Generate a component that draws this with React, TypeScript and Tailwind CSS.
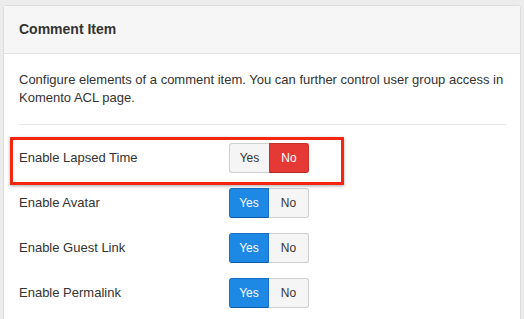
import React from "react";

function Toggle({ on }: { on: boolean }) {
  return (
    <div className="flex h-[30px] w-[80px] rounded-[3px] text-[12px] leading-none">
      {on ? (
        <>
          <div className="flex w-[40px] items-center justify-center rounded-l-[3px] border border-[#1a6fc2] border-b-[#0d5aa7] bg-[#1e88e5] text-white">Yes</div>
          <div className="flex w-[40px] items-center justify-center rounded-r-[3px] border border-l-0 border-[#cfcfcf] bg-[#f5f5f5] text-[#333]">No</div>
        </>
      ) : (
        <>
          <div className="flex w-[40px] items-center justify-center rounded-l-[3px] border border-r-0 border-[#cfcfcf] bg-[#f5f5f5] text-[#333]">Yes</div>
          <div className="flex w-[40px] items-center justify-center rounded-r-[3px] border border-[#c9302c] border-b-[#b52824] bg-[#e53935] text-white">No</div>
        </>
      )}
    </div>
  );
}

function Row({ label, on }: { label: string; on: boolean }) {
  return (
    <div className="flex h-[45px] items-center">
      <div className="w-[210px] text-[13px] text-[#333]">{label}</div>
      <Toggle on={on} />
    </div>
  );
}

export default function App() {
  return (
    <div className="h-[319px] w-[524px] overflow-hidden bg-[#ececec] pl-[3px] pt-[5px]" style={{ fontFamily: '"Liberation Sans", Arial, sans-serif' }}>
      <div className="relative h-[330px] w-[518px] rounded-t-[3px] border border-[#dcdcdc] bg-white">
        <div className="flex h-[48px] items-center border-b border-[#e3e3e3] bg-[#f6f6f6] px-[15px] text-[14px] font-bold text-[#333]">
          Comment Item
        </div>
        <div className="px-[15px]">
          <p className="pt-[17px] text-[13px] leading-[18px] text-[#333]">
            Configure elements of a comment item. You can further control user group access in Komento ACL page.
          </p>
          <div className="mt-[17px] h-px w-[487px] bg-[#e6e6e6]" />
          <div className="pt-[10px]">
            <Row label="Enable Lapsed Time" on={false} />
            <Row label="Enable Avatar" on={true} />
            <Row label="Enable Guest Link" on={true} />
            <Row label="Enable Permalink" on={true} />
          </div>
        </div>
        <div className="pointer-events-none absolute left-[6px] top-[131px] h-[48px] w-[334px] border-[3px] border-[#f4260f] shadow-[0_1px_3px_rgba(0,0,0,0.35)]" />
      </div>
    </div>
  );
}
